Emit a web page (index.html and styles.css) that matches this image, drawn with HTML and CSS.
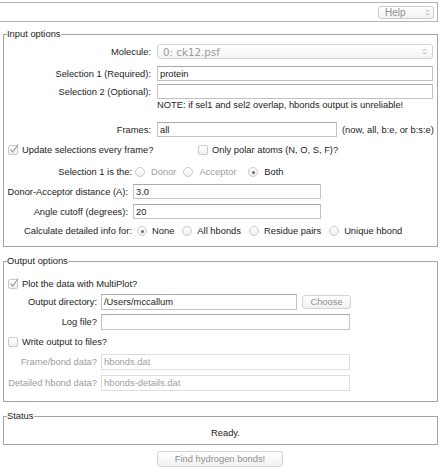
FILE: index.html
```html
<!DOCTYPE html>
<html>
<head>
<meta charset="utf-8">
<title>HBonds</title>
<link rel="stylesheet" href="styles.css">
</head>
<body>
<div class="topbar">
  <div class="menubtn"><span>Help</span><svg class="updown" width="5" height="9" viewBox="0 0 5 9"><path d="M1 3.5 L2.5 2 L4 3.5 M1 5.5 L2.5 7 L4 5.5" fill="none" stroke="#9a9a9a" stroke-width="0.9"/></svg></div>
</div>

<fieldset class="group">
  <legend>Input options</legend>
  <div class="row r-mol">
    <span class="lbl lbl-a">Molecule:</span>
    <div class="select"><span>0: ck12.psf</span><svg class="updown" width="5" height="9" viewBox="0 0 5 9"><path d="M1 3.5 L2.5 2 L4 3.5 M1 5.5 L2.5 7 L4 5.5" fill="none" stroke="#9a9a9a" stroke-width="0.9"/></svg></div>
  </div>
  <div class="row r-sel1">
    <span class="lbl lbl-a">Selection 1 (Required):</span>
    <div class="entry w-sel">protein</div>
  </div>
  <div class="row r-sel2">
    <span class="lbl lbl-a">Selection 2 (Optional):</span>
    <div class="entry w-sel"></div>
  </div>
  <div class="row r-note">
    <span class="note">NOTE: if sel1 and sel2 overlap, hbonds output is unreliable!</span>
  </div>
  <div class="row r-frames">
    <span class="lbl lbl-a">Frames:</span>
    <div class="entry w-frames">all</div>
    <span class="hint">(now, all, b:e, or b:s:e)</span>
  </div>
  <div class="row r-chk">
    <span class="chk-item first"><span class="box checked"><svg width="12" height="12" viewBox="0 0 12 12"><path d="M2.5 6.5 L4.8 9 L10 1.5" fill="none" stroke="#a2a2a2" stroke-width="1.3"/></svg></span>Update selections every frame?</span>
    <span class="chk-item"><span class="box"></span>Only polar atoms (N, O, S, F)?</span>
  </div>
  <div class="row r-role">
    <span class="lbl lbl-b">Selection 1 is the:</span>
    <span class="opts">
      <span class="opt dis"><span class="radio"></span>Donor</span>
      <span class="opt dis"><span class="radio"></span>Acceptor</span>
      <span class="opt gap-wide"><span class="radio on"></span>Both</span>
    </span>
  </div>
  <div class="row r-dist">
    <span class="lbl lbl-c">Donor-Acceptor distance (A):</span>
    <div class="entry w-num">3.0</div>
  </div>
  <div class="row r-angle">
    <span class="lbl lbl-c">Angle cutoff (degrees):</span>
    <div class="entry w-num">20</div>
  </div>
  <div class="row r-calc">
    <span class="lbl lbl-b">Calculate detailed info for:</span>
    <span class="opts opts-calc">
      <span class="opt"><span class="radio on"></span>None</span>
      <span class="opt"><span class="radio"></span>All hbonds</span>
      <span class="opt"><span class="radio"></span>Residue pairs</span>
      <span class="opt"><span class="radio"></span>Unique hbond</span>
    </span>
  </div>
</fieldset>

<fieldset class="group out">
  <legend>Output options</legend>
  <div class="row r-plot">
    <span class="chk-item"><span class="box checked"><svg width="12" height="12" viewBox="0 0 12 12"><path d="M2.5 6.5 L4.8 9 L10 1.5" fill="none" stroke="#a2a2a2" stroke-width="1.3"/></svg></span>Plot the data with MultiPlot?</span>
  </div>
  <div class="row r-dir">
    <span class="lbl lbl-d">Output directory:</span>
    <div class="entry tall w-dir">/Users/mccallum</div>
    <div class="btn choose">Choose</div>
  </div>
  <div class="row r-log">
    <span class="lbl lbl-d">Log file?</span>
    <div class="entry tall w-long"></div>
  </div>
  <div class="row r-write">
    <span class="chk-item"><span class="box"></span>Write output to files?</span>
  </div>
  <div class="row r-fb">
    <span class="lbl lbl-d dis">Frame/bond data?</span>
    <div class="entry tall w-long off">hbonds.dat</div>
  </div>
  <div class="row r-det">
    <span class="lbl lbl-d dis">Detailed hbond data?</span>
    <div class="entry tall w-long off">hbonds-details.dat</div>
  </div>
</fieldset>

<fieldset class="group status">
  <legend>Status</legend>
  <div class="status-body">Ready.</div>
</fieldset>

<div class="actions">
  <div class="btn find">Find hydrogen bonds!</div>
</div>
</body>
</html>
```

FILE: styles.css
```css
* { box-sizing: border-box; }

body {
  margin: 0;
  width: 442px;
  height: 469px;
  overflow: hidden;
  background: #ffffff;
  font-family: "Liberation Sans", Arial, sans-serif;
  font-size: 9.35px;
  color: #1c1c1c;
}

.topbar {
  margin-top: 2px;
  width: 438px;
  height: 20px;
  border: 1px solid #b4b4b4;
  border-left: none;
  display: flex;
  justify-content: flex-end;
  align-items: center;
  padding-right: 3px;
}

.menubtn {
  width: 56px;
  height: 13px;
  border: 1px solid #cdcdcd;
  border-radius: 3px;
  background: linear-gradient(#ffffff, #f2f2f2);
  display: flex;
  align-items: center;
  justify-content: space-between;
  padding: 0 3px 0 6px;
  color: #8d8d8d;
  font-size: 10px;
}

.updown { display: block; }

.group {
  margin: 6px 0 0 3px;
  padding: 0 0 9px 0;
  width: 435px;
  min-width: 0;
  border: 1px solid #a4a4a4;
}

.group legend {
  margin-left: 3px;
  padding: 0;
  line-height: 12px;
  height: 12px;
}

.group.out { margin-top: 8px; padding-bottom: 10px; }
.group.status { margin-top: 8px; padding-bottom: 0; }

.row {
  display: flex;
  align-items: center;
  height: 15px;
  white-space: nowrap;
}

.r-mol { margin-top: 4px; }
.r-sel1 { margin-top: 7px; }
.r-sel2 { margin-top: 3px; }
.r-note { height: 12px; }
.r-frames { margin-top: 11px; }
.r-chk { margin-top: 7px; height: 12px; }
.r-role { margin-top: 10px; height: 12px; }
.r-dist { margin-top: 6px; }
.r-angle { margin-top: 5px; }
.r-calc { margin-top: 6px; height: 12px; }

.r-plot { margin-top: 11px; height: 12px; }
.r-dir { margin-top: 4px; height: 16px; }
.r-log { margin-top: 4px; height: 16px; }
.r-write { margin-top: 6px; height: 12px; }
.r-fb { margin-top: 6px; height: 16px; }
.r-det { margin-top: 5px; height: 16px; }

.lbl { text-align: right; flex: none; }
.lbl-a { width: 147px; margin-right: 6px; }
.lbl-b { width: 128px; }
.lbl-c { width: 124px; margin-right: 5px; }
.lbl-d { width: 93px; margin-right: 4px; }
.dis { color: #9c9c9c; }

.select {
  width: 276px;
  height: 15px;
  border: 1px solid #d2d2d2;
  border-radius: 3px;
  background: linear-gradient(#ffffff, #f4f4f4);
  display: flex;
  align-items: center;
  justify-content: space-between;
  padding: 0 5px 0 5px;
  font-family: "DejaVu Sans", sans-serif;
  font-size: 10.3px;
  color: #9b9b9b;
}

.entry {
  height: 15px;
  border: 1px solid #c2c2c2;
  border-top-color: #a9a9a9;
  background: #ffffff;
  padding-left: 2px;
  display: flex;
  align-items: center;
  flex: none;
}
.entry.tall { height: 16px; }
.entry.off { border-color: #dedede; color: #a0a0a0; }

.w-sel { width: 276px; }
.w-frames { width: 180px; }
.w-num { width: 188px; }
.w-dir { width: 196px; }
.w-long { width: 249px; }

.hint { margin-left: 5px; }
.note { margin-left: 153px; }

.chk-item {
  display: flex;
  align-items: center;
  margin-left: 4px;
}
.chk-item.first { width: 190px; }
.r-chk .chk-item:not(.first) { margin-left: 0; }

.box {
  position: relative;
  width: 10px;
  height: 10px;
  margin-right: 4px;
  border: 1px solid #c9c9c9;
  border-radius: 2px;
  background: linear-gradient(#ffffff, #f0f0f0);
  flex: none;
}
.box svg {
  position: absolute;
  left: -1px;
  top: -3px;
}

.opts { display: flex; align-items: center; margin-left: 3px; }
.opts-calc { margin-left: 5px; }
.opt { display: flex; align-items: center; margin-right: 7px; }
.opt.gap-wide { margin-left: 5px; }
.opts-calc .opt { margin-right: 8px; }
.opts-calc .radio { margin-right: 5px; }

.radio {
  position: relative;
  width: 10px;
  height: 10px;
  border-radius: 50%;
  border: 1px solid #cacaca;
  background: linear-gradient(#ffffff, #eeeeee);
  margin-right: 6px;
  flex: none;
}
.radio.on::after {
  content: "";
  position: absolute;
  left: 2.5px;
  top: 2.5px;
  width: 3px;
  height: 3px;
  border-radius: 50%;
  background: #6a6a6a;
}

.btn {
  border: 1px solid #d3d3d3;
  border-radius: 3px;
  background: linear-gradient(#ffffff, #f1f1f1);
  color: #8e8e8e;
  display: flex;
  align-items: center;
  justify-content: center;
}
.choose { width: 49px; height: 14px; margin-left: 5px; }

.status-body {
  height: 22px;
  display: flex;
  align-items: center;
  justify-content: center;
  padding-left: 10px;
}

.actions {
  width: 440px;
  display: flex;
  justify-content: center;
  margin-top: 6px;
}
.find { width: 126px; height: 16px; }
```
